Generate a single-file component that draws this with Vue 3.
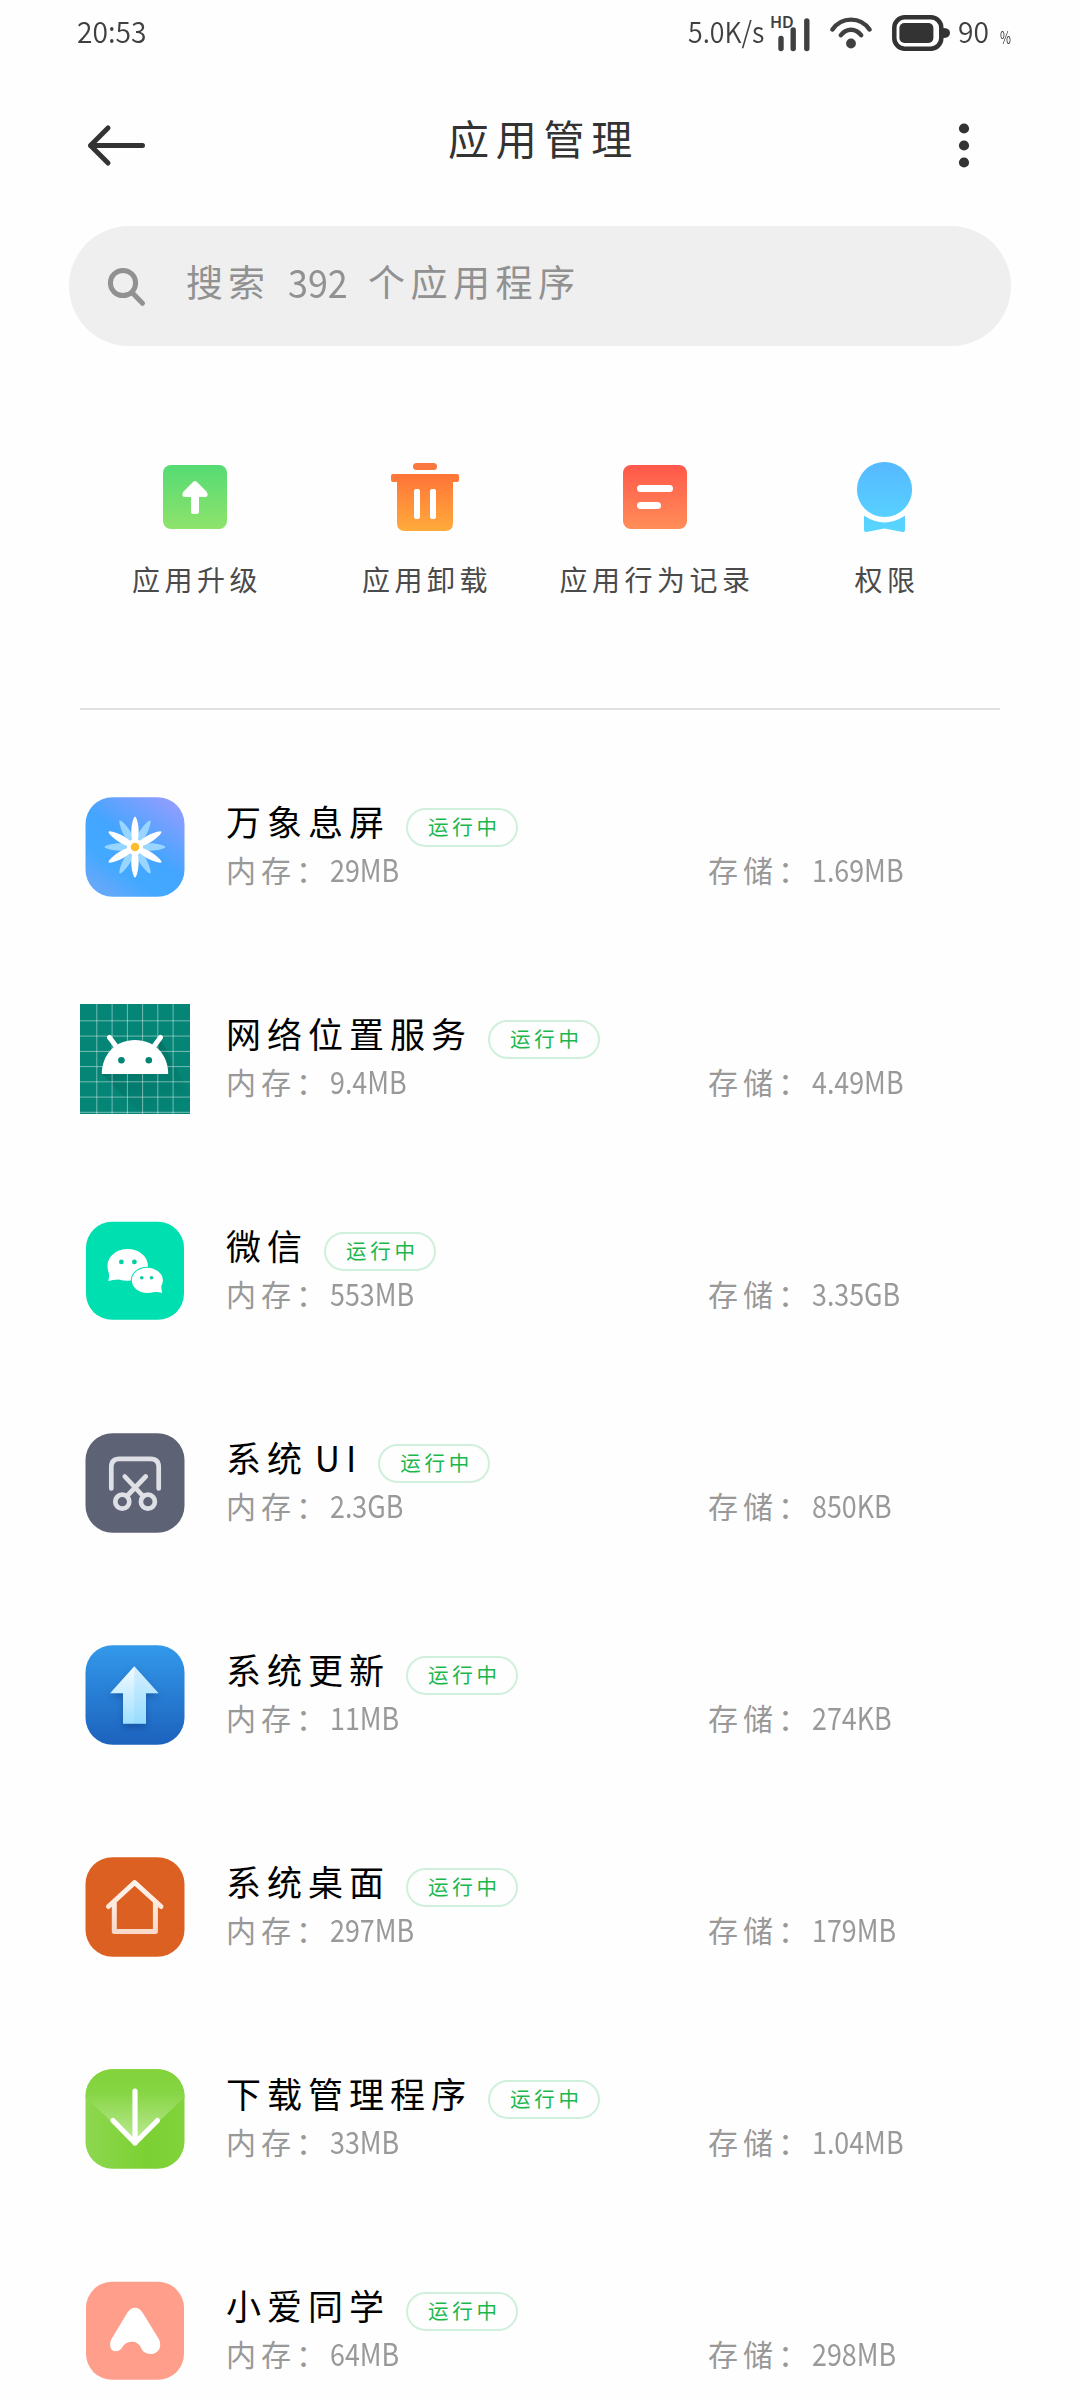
<script setup>
const actions = [
  { id: 'upgrade', label: '应用升级' },
  { id: 'uninstall', label: '应用卸载' },
  { id: 'records', label: '应用行为记录' },
  { id: 'permission', label: '权限' },
]

const apps = [
  { id: 'flower', name: '万象息屏', memory: '29MB', storage: '1.69MB' },
  { id: 'android', name: '网络位置服务', memory: '9.4MB', storage: '4.49MB' },
  { id: 'wechat', name: '微信', memory: '553MB', storage: '3.35GB' },
  { id: 'sysui', name: '系统 UI', memory: '2.3GB', storage: '850KB' },
  { id: 'update', name: '系统更新', memory: '11MB', storage: '274KB' },
  { id: 'home', name: '系统桌面', memory: '297MB', storage: '179MB' },
  { id: 'download', name: '下载管理程序', memory: '33MB', storage: '1.04MB' },
  { id: 'xiaoai', name: '小爱同学', memory: '64MB', storage: '298MB' },
]

const gridLines = [16.8, 32.1, 47.4, 62.6, 77.8, 93.1, 108.3]
const petal = 'M0 0C-3.5 -6 -5.2 -16 -2 -27Q0 -34 2 -27C5.2 -16 3.5 -6 0 0Z'
</script>

<template>
  <div class="page">
    <div class="status">
      <span class="clock"><span class="narrow">20:53</span></span>
      <span class="speed"><span class="narrow">5.0K/s</span></span>
      <svg class="signal" width="42" height="40" viewBox="0 0 42 40">
        <text x="-1" y="16" class="hd">HD</text>
        <g stroke="#404040" stroke-width="5.4" stroke-linecap="round">
          <path d="M10 38.5V48.5" transform="translate(0 -12)" />
          <path d="M22.2 30V48.5" transform="translate(0 -12)" />
          <path d="M35.8 21V48.5" transform="translate(0 -12)" />
        </g>
      </svg>
      <svg class="wifi" width="42" height="34" viewBox="0 0 42 34">
        <g fill="none" stroke="#404040" stroke-width="4.4" stroke-linecap="round">
          <path d="M2.5 14.5C11.5 1.3 30.5 1.3 39.5 14.5" />
          <path d="M10.8 20.3C16 12.8 26 12.8 31.2 20.3" />
        </g>
        <circle cx="21" cy="28.5" r="4.9" fill="#404040" />
      </svg>
      <svg class="battery" width="58" height="36" viewBox="0 0 58 36">
        <rect x="2.3" y="2.3" width="47" height="31.4" rx="10.5" fill="none" stroke="#333" stroke-width="4.5" />
        <rect x="7.4" y="8" width="34" height="20" rx="5" fill="#333" />
        <path d="M51 13Q58 13 58 18T51 23Z" fill="#333" />
      </svg>
      <span class="level"><span class="narrow">90</span></span>
      <span class="percent"><span class="narrow">%</span></span>
    </div>

    <header class="header">
      <svg width="60" height="44" viewBox="0 0 60 44">
        <path d="M22 5L4.5 22.5L22 40M4.5 22.5H56.5" fill="none" stroke="#333" stroke-width="5" stroke-linecap="round" stroke-linejoin="round" />
      </svg>
      <h1>应用管理</h1>
      <svg width="12" height="46" viewBox="0 0 12 46">
        <circle cx="6" cy="6.5" r="5.1" fill="#333" />
        <circle cx="6" cy="23.5" r="5.1" fill="#333" />
        <circle cx="6" cy="40.5" r="5.1" fill="#333" />
      </svg>
    </header>

    <div class="search">
      <svg width="40" height="40" viewBox="0 0 40 40">
        <circle cx="16" cy="16" r="12.6" fill="none" stroke="#919191" stroke-width="5" />
        <path d="M25.5 26L35.5 36.3" stroke="#919191" stroke-width="5" stroke-linecap="round" />
      </svg>
      <span class="hint">搜索</span>
      <span class="count"><span class="narrow">392</span></span>
      <span class="hint">个应用程序</span>
    </div>

    <nav class="actions">
      <div v-for="a in actions" :key="a.id" class="action">
        <svg width="80" height="80" viewBox="0 0 80 80">
          <template v-if="a.id === 'upgrade'">
            <defs><linearGradient id="gUp" x1="0" y1="0" x2="0" y2="1"><stop stop-color="#55db74" /><stop offset="1" stop-color="#8ee36b" /></linearGradient></defs>
            <rect x="8" y="8" width="64" height="64" rx="8" fill="url(#gUp)" />
            <path d="M38 25Q40 23 42 25L51.5 34.5Q54.5 39.8 50 40H44V54.5Q44 57 41.5 57H38.5Q36 57 36 54.5V40H30Q25.5 39.8 28.5 34.5Z" fill="#fff" />
          </template>
          <template v-else-if="a.id === 'uninstall'">
            <defs><linearGradient id="gDel" x1="0" y1="17" x2="0" y2="74" gradientUnits="userSpaceOnUse"><stop stop-color="#ff7438" /><stop offset="1" stop-color="#ffab3b" /></linearGradient></defs>
            <rect x="28" y="6" width="24" height="7" rx="3.5" fill="#f9783f" />
            <path d="M8 17H72Q74 17 74 19V23Q74 25 72 25H68V66Q68 74 60 74H20Q12 74 12 66V25H8Q6 25 6 23V19Q6 17 8 17Z" fill="url(#gDel)" />
            <rect x="29" y="32" width="6" height="30" rx="2" fill="#fff" />
            <rect x="45" y="32" width="6" height="30" rx="2" fill="#fff" />
          </template>
          <template v-else-if="a.id === 'records'">
            <defs><linearGradient id="gRec" x1="0" y1="0" x2="0" y2="1"><stop stop-color="#ff584b" /><stop offset="1" stop-color="#ff8e58" /></linearGradient></defs>
            <rect x="8" y="8" width="64" height="64" rx="8" fill="url(#gRec)" />
            <rect x="22" y="28" width="36" height="7" rx="3.5" fill="#fff" />
            <rect x="22" y="45" width="24" height="7" rx="3.5" fill="#fff" />
          </template>
          <template v-else>
            <defs><linearGradient id="gPer" x1="0" y1="5" x2="0" y2="75" gradientUnits="userSpaceOnUse"><stop stop-color="#56b9ff" /><stop offset="1" stop-color="#58d6ff" /></linearGradient></defs>
            <circle cx="39.5" cy="32.5" r="27.6" fill="url(#gPer)" />
            <path d="M19 58.8Q39.5 72 60 58.8V73Q60 75.5 57.5 75L39.5 71.5L21.5 75Q19 75.5 19 73Z" fill="url(#gPer)" />
          </template>
        </svg>
        <span>{{ a.label }}</span>
      </div>
    </nav>

    <ul class="apps">
      <li v-for="app in apps" :key="app.id" class="app">
        <svg class="icon" width="110" height="110" viewBox="0 0 110 110">
          <template v-if="app.id === 'flower'">
            <defs>
              <linearGradient id="gFl" x1="1" y1="0" x2="0.3" y2="1"><stop stop-color="#9f9cff" /><stop offset="0.55" stop-color="#43a5ff" /><stop offset="0.8" stop-color="#43a9ff" /><stop offset="1" stop-color="#62a8fb" /></linearGradient>
            </defs>
            <rect x="5.5" y="5.2" width="99" height="99.5" rx="27" fill="url(#gFl)" />
            <g transform="translate(55 55)">
              <path v-for="n in 6" :key="'b' + n" :d="petal" :transform="`rotate(${n * 60 + 30})`" fill="#98d6ff" />
              <path v-for="n in 6" :key="'f' + n" :d="petal" :transform="`rotate(${n * 60})`" fill="#fff" />
              <circle r="8" fill="#fff" />
              <circle r="4.3" fill="#fdbc2c" />
            </g>
          </template>
          <template v-else-if="app.id === 'android'">
            <defs><linearGradient id="gSh" x1="0.2" y1="0" x2="0.7" y2="1"><stop stop-color="#00594f" stop-opacity="0.5" /><stop offset="1" stop-color="#00594f" stop-opacity="0" /></linearGradient></defs>
            <rect width="110" height="110" fill="#048576" />
            <path d="M22 70L60 110H110V90L80 34L60 50Z" fill="url(#gSh)" />
            <g stroke="#fff" stroke-opacity="0.5" stroke-width="0.9">
              <line v-for="p in gridLines.slice(0, 6)" :key="'v' + p" :x1="p" :x2="p" y1="0" y2="110" />
              <line v-for="p in gridLines" :key="'h' + p" :y1="p" :y2="p" x1="0" x2="110" />
            </g>
            <path d="M21.8 70C21.8 50 36 36 55 36S88.2 50 88.2 70Z" fill="#fff" />
            <path d="M29.5 33.5L37 43.5M80.5 33.5L73 43.5" stroke="#fff" stroke-width="5" stroke-linecap="round" />
            <circle cx="41.4" cy="56.3" r="3.3" fill="#048576" />
            <circle cx="68.8" cy="56.3" r="3.3" fill="#048576" />
          </template>
          <template v-else-if="app.id === 'wechat'">
            <rect x="6" y="5.8" width="98" height="98" rx="26" fill="#00dfb0" />
            <path d="M47.7 33C59 33 67.9 40.5 67.9 49.5S59 64.8 47.7 64.8Q43 64.8 38.5 63.5Q33 63.8 28.3 65Q29.5 60 28.8 57Q27.5 53.5 27.5 49.5C27.5 40.5 36.5 33 47.7 33Z" fill="#fff" />
            <path d="M67.3 51.8C76 51.8 82.9 57.5 82.9 64.3Q82.9 67.5 81.3 70Q81.5 74 82.2 77Q78 75.5 74.5 76Q71 77 67.3 77C58.5 77 51.8 71.2 51.8 64.3S58.5 51.8 67.3 51.8Z" fill="#fff" stroke="#00dfb0" stroke-width="2" paint-order="stroke" />
            <g fill="#00cfa5">
              <circle cx="41.4" cy="45.9" r="2.4" /><circle cx="54.4" cy="45.9" r="2.4" />
              <circle cx="61.8" cy="61.7" r="1.8" /><circle cx="71.5" cy="61.7" r="1.8" />
            </g>
          </template>
          <template v-else-if="app.id === 'sysui'">
            <rect x="5.5" y="5.2" width="99" height="99.5" rx="27" fill="#5d6275" />
            <g fill="none" stroke="#dfe0e6" stroke-width="4.7">
              <path d="M31.3 60.5V39Q31.3 30.8 39.5 30.8H70.5Q78.7 30.8 78.7 39V60.5" stroke-linecap="round" />
              <path d="M44.8 48.5L62.5 67.5M65.7 48.5L47.5 67.5" stroke-linecap="round" />
              <circle cx="42.3" cy="73.7" r="7" />
              <circle cx="67.9" cy="73.7" r="7" />
            </g>
          </template>
          <template v-else-if="app.id === 'update'">
            <defs>
              <linearGradient id="gBl" x1="0" y1="0" x2="0" y2="1"><stop stop-color="#3399ea" /><stop offset="1" stop-color="#1c62bd" /></linearGradient>
              <linearGradient id="gAr" x1="0" y1="0" x2="0" y2="1"><stop stop-color="#f3fbff" /><stop offset="1" stop-color="#a0e0ff" /></linearGradient>
            </defs>
            <rect x="5.5" y="5.2" width="99" height="99.5" rx="27" fill="url(#gBl)" />
            <path class="arrow-shadow" d="M54.3 26.3L78.6 53.3H66V83.7H43V53.3H30Z" fill="url(#gAr)" />
            <path d="M54.3 26.3V83.7H66V53.3H78.6Z" fill="#7fd0ff" fill-opacity="0.25" />
          </template>
          <template v-else-if="app.id === 'home'">
            <defs><linearGradient id="gHo" x1="0" y1="0" x2="0" y2="1"><stop stop-color="#fff5ee" /><stop offset="1" stop-color="#f8d9ca" /></linearGradient></defs>
            <rect x="5.5" y="5.2" width="99" height="99.5" rx="27" fill="#dc6021" />
            <path d="M28.5 54.5L54.6 30.5L81 54.5M34.3 51V79.5H75.4V51" fill="none" stroke="url(#gHo)" stroke-width="5" stroke-linecap="round" stroke-linejoin="round" />
          </template>
          <template v-else-if="app.id === 'download'">
            <defs>
              <linearGradient id="gDo" x1="0" y1="0.5" x2="1" y2="0.5"><stop stop-color="#8fd852" /><stop offset="0.6" stop-color="#7bd133" /><stop offset="1" stop-color="#82d33b" /></linearGradient>
              <linearGradient id="gFd" x1="0" y1="0" x2="0" y2="1"><stop stop-color="#80d239" /><stop offset="0.35" stop-color="#86d543" /><stop offset="1" stop-color="#c0eb9b" /></linearGradient>
              <clipPath id="cDo"><rect x="5.5" y="5.2" width="99" height="99.5" rx="27" /></clipPath>
            </defs>
            <g clip-path="url(#cDo)">
              <rect width="110" height="110" fill="url(#gDo)" />
              <path d="M0 0H110V28L55 80L0 28Z" fill="url(#gFd)" />
            </g>
            <path d="M55 27V79M32.9 56.5L55 79L77.5 56.5" fill="none" stroke="#fff" stroke-width="5.2" stroke-linecap="round" stroke-linejoin="round" />
          </template>
          <template v-else>
            <rect x="6" y="5.8" width="98" height="98" rx="26" fill="#ff9f8b" />
            <path d="M47.5 36.5Q50.5 31.7 55 31.7T62.5 36.5L78.5 62.5C83 71 78 78 71 78C64 78 62 74 61 71.5C59 67.5 56 65.7 51.4 65.7C47 65.7 44 68.5 42.5 71C40.5 74 38.5 75.2 35.5 75.2C30.5 75.2 28.5 69 31.5 63Z" fill="#fff" />
          </template>
        </svg>
        <div class="info">
          <div class="title">
            <span class="name">{{ app.name }}</span>
            <span class="badge">运行中</span>
          </div>
          <div class="meta">
            <div class="memory"><span class="label">内存：</span><span class="value">{{ app.memory }}</span></div>
            <div class="storage"><span class="label">存储：</span><span class="value">{{ app.storage }}</span></div>
          </div>
        </div>
      </li>
    </ul>
  </div>
</template>

<style>
body {
  background: #fefefe;
}
</style>

<style scoped>
.page {
  width: 1080px;
  height: 2400px;
  overflow: hidden;
  background: #fefefe;
  font-family: "Noto Sans CJK SC", sans-serif;
  font-weight: 400;
  color: #333;
  white-space: nowrap;
}
.narrow {
  display: inline-block;
  transform-origin: 0 50%;
}
.status {
  display: flex;
  height: 64px;
  padding-left: 77px;
  line-height: 61px;
  font-size: 30px;
  font-weight: 350;
  color: #404040;
}
.clock { width: 611px; }
.clock .narrow { transform: scaleX(0.94); }
.speed { width: 83px; font-size: 29px; }
.speed .narrow { transform: scaleX(0.92); }
.signal { margin-top: 12px; overflow: visible; }
.hd {
  font: 600 16px "Noto Sans", sans-serif;
  fill: #404040;
}
.wifi { margin: 15px 0 0 16.5px; }
.battery { margin: 15px 0 0 20.5px; }
.level { width: 42px; margin-left: 8px; }
.level .narrow { transform: scaleX(0.94); }
.percent { padding-top: 6px; font-size: 17px; font-weight: 400; }
.percent .narrow { transform: scaleX(0.7); }

.header {
  display: flex;
  justify-content: space-between;
  align-items: center;
  height: 162px;
  padding: 0 110px 0 86px;
  box-sizing: border-box;
}
.header h1 {
  margin: -17px 17px 0 0;
  font-size: 41px;
  line-height: 60px;
  font-weight: 400;
  letter-spacing: 6.8px;
}
.search {
  display: flex;
  align-items: center;
  height: 120px;
  margin: 0 69px;
  padding-left: 38px;
  box-sizing: border-box;
  border-radius: 60px;
  background: #efefef;
  color: #919191;
  font-size: 37px;
}
.search svg { margin-top: 2px; }
.hint {
  margin: -10px 0 0 39px;
  letter-spacing: 5px;
}
.count {
  width: 61px;
  margin: -10px 0 0 18px;
  font-size: 39px;
}
.count .narrow { transform: scaleX(0.92); }
.count + .hint {
  margin-left: 19px;
  letter-spacing: 5.5px;
}

.actions {
  display: flex;
  height: 362px;
  margin: 0 80px;
  padding-top: 111px;
  box-sizing: border-box;
}
.action {
  width: 230px;
  display: flex;
  flex-direction: column;
  align-items: center;
  gap: 22px;
  font-size: 28px;
  line-height: 40px;
  letter-spacing: 4.5px;
  color: #4a4a4a;
}
.action span { margin-right: -4px; }
.apps {
  margin: 0 80px;
  padding: 31px 0 0;
  border-top: 2px solid #e1e1e1;
  list-style: none;
}
.app {
  display: flex;
  height: 212px;
  padding-top: 51px;
  box-sizing: border-box;
}
.icon { flex: none; }
.info { padding: 6px 0 0 36px; }
.title {
  display: flex;
  align-items: flex-end;
  gap: 16px;
  height: 49px;
}
.name {
  font-size: 35px;
  line-height: 46px;
  padding-bottom: 3px;
  letter-spacing: 6px;
  word-spacing: -7px;
  color: #000;
}
.badge {
  width: 112px;
  height: 39px;
  box-sizing: border-box;
  border: 2px solid #d0f0dc;
  border-radius: 20px;
  padding-left: 20px;
  font-size: 20.5px;
  line-height: 33px;
  letter-spacing: 3.7px;
  color: #1ab74c;
}
.meta {
  display: flex;
  height: 46px;
  line-height: 44px;
  font-size: 30px;
  color: #999;
}
.memory { width: 482px; }
.label {
  display: inline-block;
  width: 104px;
  letter-spacing: 5px;
}
.value {
  display: inline-block;
  font-size: 31px;
  transform: scaleX(0.865);
  transform-origin: 0 50%;
}
.arrow-shadow {
  filter: drop-shadow(0 4px 3px rgba(10, 60, 130, 0.45));
}
</style>
